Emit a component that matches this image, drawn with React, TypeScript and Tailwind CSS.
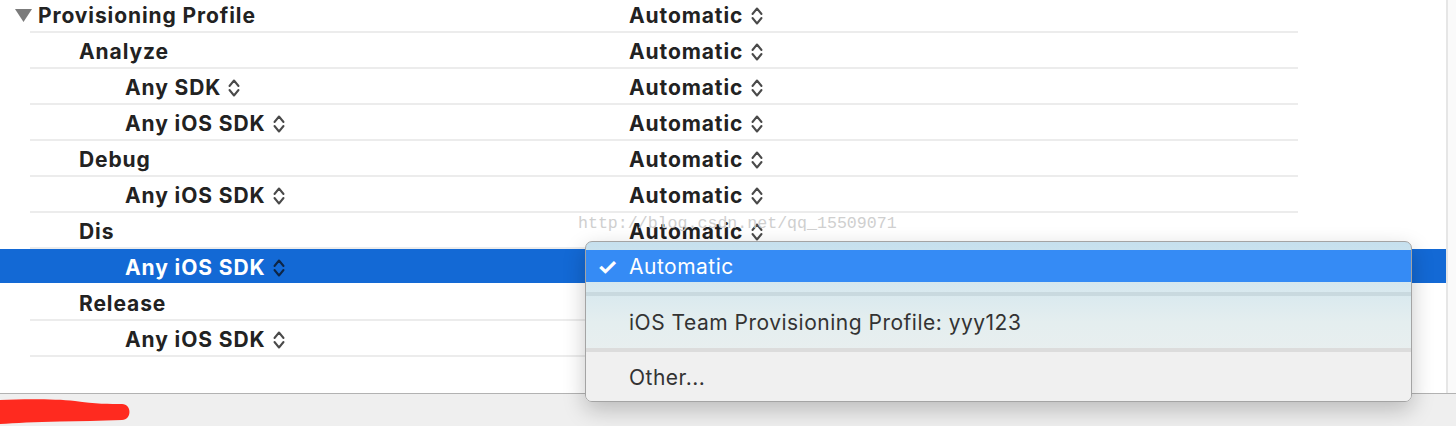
import React from 'react';

interface Row {
    label: string;
    indent: number;
    chevron?: boolean;
    selected?: boolean;
    disclosure?: boolean;
    hideValue?: boolean;
}

// rows under the open popup don't show their value
const rows: Row[] = [
    { label: 'Provisioning Profile', indent: 15, disclosure: true },
    { label: 'Analyze', indent: 79 },
    { label: 'Any SDK', indent: 125, chevron: true },
    { label: 'Any iOS SDK', indent: 125, chevron: true },
    { label: 'Debug', indent: 79 },
    { label: 'Any iOS SDK', indent: 125, chevron: true },
    { label: 'Dis', indent: 79 },
    { label: 'Any iOS SDK', indent: 125, chevron: true, selected: true, hideValue: true },
    { label: 'Release', indent: 79, hideValue: true },
    { label: 'Any iOS SDK', indent: 125, chevron: true, hideValue: true },
];

function Chevrons({ color = '#4a4a4a' }: { color?: string }) {
    return (
        <svg width="12" height="20" viewBox="0 0 12 20" fill="none" className="shrink-0">
            <path d="M1.5 8 L6 2.5 L10.5 8" stroke={color} strokeWidth="2" strokeLinecap="round" strokeLinejoin="round" />
            <path d="M1.5 12 L6 17.5 L10.5 12" stroke={color} strokeWidth="2" strokeLinecap="round" strokeLinejoin="round" />
        </svg>
    );
}

function Disclosure() {
    return (
        <svg width="17" height="13" viewBox="0 0 17 13" className="shrink-0">
            <path d="M0 0 H17 L8.5 13 Z" fill="#7b7b7b" />
        </svg>
    );
}

function SettingRow({ row, first }: { row: Row; first: boolean }) {
    return (
        <div>
            <div
                className={`flex items-center ${first ? 'h-[31px]' : 'h-[34px] pt-[3px]'} ${row.selected ? 'bg-[#1369d5] text-white' : 'text-[#222]'}`}
            >
                <div className="w-[629px] shrink-0 flex items-center" style={{ paddingLeft: row.indent }}>
                    {row.disclosure && <span className="mr-[6px] flex"><Disclosure /></span>}
                    <span className="font-bold text-[21px] tracking-[0.9px]">{row.label}</span>
                    {row.chevron && (
                        <span className="ml-[7px] flex">
                            <Chevrons color={row.selected ? '#0e2545' : '#4a4a4a'} />
                        </span>
                    )}
                </div>
                {!row.hideValue && (
                    <div className="flex items-center text-[#222]">
                        <span className="font-bold text-[21px] tracking-[0.9px]">Automatic</span>
                        <span className="ml-[8px] flex">
                            <Chevrons />
                        </span>
                    </div>
                )}
            </div>
            <div className={`h-[2px] ml-[30px] w-[1268px] ${row.selected ? 'bg-white' : 'bg-[#ececec]'}`} />
        </div>
    );
}

function PopupMenu() {
    return (
        <div className="absolute left-[585px] top-[241px] w-[827px] h-[161px] rounded-[7px] border border-[#a4a4a4] overflow-hidden shadow-[0_8px_22px_rgba(0,0,0,0.22)] bg-gradient-to-b from-[#c6e0ee] via-[#e4eeef] to-[#f0f0f0]">
            <div className="h-[8px]" />
            <div className="h-[32px] bg-[#358bf5] flex items-center text-white pt-[2px]">
                <span className="w-[43px] pl-[11px] text-[23px] font-bold leading-none">✓</span>
                <span className="text-[21px] tracking-[0.5px]">Automatic</span>
            </div>
            <div className="h-[10px]" />
            <div className="h-[4px] bg-[#c9d9df]" />
            <div className="h-[52px] flex items-center pl-[43px] pt-[2px] text-[21px] tracking-[0.5px] text-[#333]">
                iOS Team Provisioning Profile: yyy123
            </div>
            <div className="h-[4px] bg-[#dcdcdc]" />
            <div className="h-[49px] flex items-center pl-[43px] pt-[2px] text-[21px] tracking-[0.5px] text-[#333] bg-[#f0f0f0]">
                Other...
            </div>
        </div>
    );
}

export default function App() {
    return (
        <div className="relative w-[1456px] h-[426px] overflow-hidden bg-white" style={{ fontFamily: 'Inter, "Liberation Sans", sans-serif' }}>
            <div className="flex h-[393px]">
                <div className="w-[1448px] shrink-0 border-r-2 border-[#e6e6e6]">
                    {rows.map((row, i) => (
                        <SettingRow key={i} row={row} first={i === 0} />
                    ))}
                </div>
                <div className="flex-1 bg-[#fafafa]" />
            </div>
            <div className="relative h-[33px] border-t border-[#b2b2b2] bg-[#efefef]">
                <svg width="140" height="32" viewBox="0 0 140 32" className="absolute left-0 top-0">
                    <path
                        d="M0 6 C 25 5, 55 5, 75 7 C 95 10, 110 10, 122 10 C 132 10, 132 26, 122 26 C 100 27, 80 27, 60 27.5 C 35 28, 15 29, 0 30 Z"
                        fill="#ff2a1f"
                    />
                </svg>
            </div>
            <PopupMenu />
            <div
                className="absolute left-[578px] top-[212px] text-[16.6px] text-[#cfcfcf] pointer-events-none"
                style={{ fontFamily: '"Liberation Mono", monospace' }}
            >
                http://blog.csdn.net/qq_15509071
            </div>
        </div>
    );
}
